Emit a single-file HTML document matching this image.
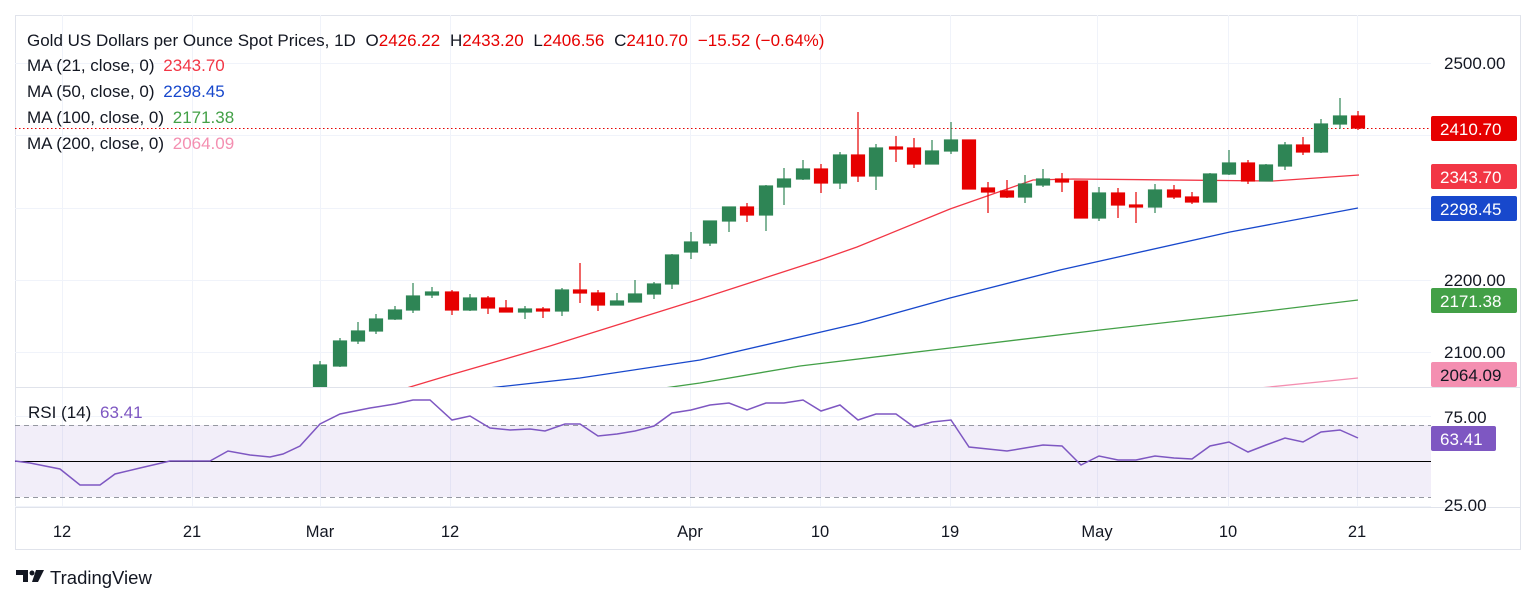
<!DOCTYPE html>
<html><head><meta charset="utf-8"><style>
body{margin:0;background:#fff;width:1536px;height:603px;overflow:hidden;font-family:"Liberation Sans",sans-serif}
svg text{font-family:"Liberation Sans",sans-serif}
</style></head><body>
<svg width="1536" height="603" xmlns="http://www.w3.org/2000/svg">
<rect x="15.5" y="15.5" width="1505" height="534" fill="#fff" stroke="#e0e3eb"/>
<g stroke="#f0f3fa" stroke-width="1">
<line x1="15" y1="63.5" x2="1431" y2="63.5"/><line x1="15" y1="135.5" x2="1431" y2="135.5"/><line x1="15" y1="208.5" x2="1431" y2="208.5"/><line x1="15" y1="280.5" x2="1431" y2="280.5"/><line x1="15" y1="352.5" x2="1431" y2="352.5"/>
<line x1="15" y1="416.5" x2="1431" y2="416.5"/><line x1="15" y1="506.5" x2="1431" y2="506.5"/>
<line x1="62.5" y1="15" x2="62.5" y2="507"/><line x1="192.5" y1="15" x2="192.5" y2="507"/><line x1="320.5" y1="15" x2="320.5" y2="507"/><line x1="450.5" y1="15" x2="450.5" y2="507"/><line x1="690.5" y1="15" x2="690.5" y2="507"/><line x1="820.5" y1="15" x2="820.5" y2="507"/><line x1="950.5" y1="15" x2="950.5" y2="507"/><line x1="1097.5" y1="15" x2="1097.5" y2="507"/><line x1="1228.5" y1="15" x2="1228.5" y2="507"/><line x1="1357.5" y1="15" x2="1357.5" y2="507"/>
</g>
<line x1="15" y1="387.5" x2="1520" y2="387.5" stroke="#e0e3eb"/>
<line x1="15" y1="507.5" x2="1520" y2="507.5" stroke="#e0e3eb"/>
<rect x="15" y="425" width="1416" height="72" fill="#7e57c2" fill-opacity="0.1"/>
<line x1="15" y1="425.5" x2="1431" y2="425.5" stroke="#9598a1" stroke-dasharray="5,4"/>
<line x1="15" y1="497.5" x2="1431" y2="497.5" stroke="#9598a1" stroke-dasharray="5,4"/>
<line x1="15" y1="461.5" x2="1431" y2="461.5" stroke="#000"/>
<polyline fill="none" stroke="#7e57c2" stroke-width="1.5" points="15,461 30,463 60,469 80,485 100,485 115,474 140,468 170,461 210,461 228,451 250,455 270,457 283,454 300,446 320,424 340,414 370,408 395,404 413,400 430,400 452,420 470,416 490,428 510,430 530,429 545,431 565,424 580,424 598,436 617,434 635,431 654,426 672,413 691,410 710,405 729,403 747,410 766,403 784,403 803,400 821,411 840,405 858,420 876,414 896,414 914,427 932,422 951,420 969,447 988,449 1007,451 1025,448 1043,445 1062,446 1081,465 1099,456 1118,460 1136,460 1155,456 1174,458 1192,459 1210,446 1229,442 1248,452 1266,445 1285,438 1303,442 1321,432 1340,430 1358,438"/>
<clipPath id="pc"><rect x="15" y="15" width="1416" height="372"/></clipPath>
<g clip-path="url(#pc)">
<line x1="15" y1="128.5" x2="1431" y2="128.5" stroke="#e60000" stroke-dasharray="1.5,2.5"/>
<polyline fill="none" stroke="#f23645" stroke-width="1.3" points="400,390 450,375 550,346 700,299 820,260 857,247 950,209 1033,180 1073,179 1273,181 1359,175"/>
<polyline fill="none" stroke="#1848cc" stroke-width="1.3" points="470,390 580,378 700,360 860,323 950,298 1060,270 1230,232 1358,208"/>
<polyline fill="none" stroke="#43a047" stroke-width="1.3" points="650,390 700,383 800,366 950,348 1100,330 1250,313 1358,300"/>
<polyline fill="none" stroke="#f48fb1" stroke-width="1.3" points="1240,390 1358,378"/>
<g stroke-width="1.2">
<g fill="#2e8555" stroke="#2e8555">
<line x1="320" y1="361" x2="320" y2="390"/><rect x="313.5" y="365" width="13" height="25"/>
<line x1="340" y1="338" x2="340" y2="367"/><rect x="333.5" y="341" width="13" height="25"/>
<line x1="358" y1="322" x2="358" y2="344"/><rect x="351.5" y="331" width="13" height="10"/>
<line x1="376" y1="314" x2="376" y2="334"/><rect x="369.5" y="319" width="13" height="12"/>
<line x1="395" y1="306" x2="395" y2="320"/><rect x="388.5" y="310" width="13" height="9"/>
<line x1="413" y1="283" x2="413" y2="313"/><rect x="406.5" y="296" width="13" height="14"/>
<line x1="432" y1="287" x2="432" y2="298"/><rect x="425.5" y="292" width="13" height="3"/>
<line x1="470" y1="294" x2="470" y2="311"/><rect x="463.5" y="298" width="13" height="12"/>
<line x1="525" y1="306" x2="525" y2="319"/><rect x="518.5" y="309" width="13" height="3"/>
<line x1="562" y1="288" x2="562" y2="316"/><rect x="555.5" y="290" width="13" height="21"/>
<line x1="617" y1="293" x2="617" y2="305"/><rect x="610.5" y="301" width="13" height="4"/>
<line x1="635" y1="280" x2="635" y2="302"/><rect x="628.5" y="294" width="13" height="8"/>
<line x1="654" y1="282" x2="654" y2="299"/><rect x="647.5" y="284" width="13" height="10"/>
<line x1="672" y1="254" x2="672" y2="289"/><rect x="665.5" y="255" width="13" height="29"/>
<line x1="691" y1="232" x2="691" y2="259"/><rect x="684.5" y="242" width="13" height="10"/>
<line x1="710" y1="221" x2="710" y2="246"/><rect x="703.5" y="221" width="13" height="22"/>
<line x1="729" y1="207" x2="729" y2="232"/><rect x="722.5" y="207" width="13" height="14"/>
<line x1="766" y1="185" x2="766" y2="231"/><rect x="759.5" y="186" width="13" height="29"/>
<line x1="784" y1="168" x2="784" y2="205"/><rect x="777.5" y="179" width="13" height="8"/>
<line x1="803" y1="160" x2="803" y2="180"/><rect x="796.5" y="169" width="13" height="10"/>
<line x1="840" y1="152" x2="840" y2="189"/><rect x="833.5" y="155" width="13" height="28"/>
<line x1="876" y1="144" x2="876" y2="190"/><rect x="869.5" y="148" width="13" height="28"/>
<line x1="932" y1="140" x2="932" y2="164"/><rect x="925.5" y="151" width="13" height="13"/>
<line x1="951" y1="122" x2="951" y2="154"/><rect x="944.5" y="140" width="13" height="11"/>
<line x1="1025" y1="175" x2="1025" y2="203"/><rect x="1018.5" y="184" width="13" height="13"/>
<line x1="1043" y1="169" x2="1043" y2="187"/><rect x="1036.5" y="179" width="13" height="6"/>
<line x1="1099" y1="187" x2="1099" y2="221"/><rect x="1092.5" y="193" width="13" height="25"/>
<line x1="1155" y1="184" x2="1155" y2="213"/><rect x="1148.5" y="190" width="13" height="17"/>
<line x1="1210" y1="173" x2="1210" y2="202"/><rect x="1203.5" y="174" width="13" height="28"/>
<line x1="1229" y1="150" x2="1229" y2="175"/><rect x="1222.5" y="163" width="13" height="11"/>
<line x1="1266" y1="164" x2="1266" y2="181"/><rect x="1259.5" y="165" width="13" height="16"/>
<line x1="1285" y1="142" x2="1285" y2="170"/><rect x="1278.5" y="145" width="13" height="21"/>
<line x1="1321" y1="119" x2="1321" y2="153"/><rect x="1314.5" y="124" width="13" height="28"/>
<line x1="1340" y1="98" x2="1340" y2="129"/><rect x="1333.5" y="116" width="13" height="8"/>
</g>
<g fill="#e60000" stroke="#e60000">
<line x1="452" y1="290" x2="452" y2="315"/><rect x="445.5" y="292" width="13" height="18"/>
<line x1="488" y1="296" x2="488" y2="314"/><rect x="481.5" y="298" width="13" height="10"/>
<line x1="506" y1="300" x2="506" y2="312"/><rect x="499.5" y="308" width="13" height="4"/>
<line x1="543" y1="307" x2="543" y2="318"/><rect x="536.5" y="309" width="13" height="2"/>
<line x1="580" y1="263" x2="580" y2="303"/><rect x="573.5" y="290" width="13" height="3"/>
<line x1="598" y1="290" x2="598" y2="311"/><rect x="591.5" y="293" width="13" height="12"/>
<line x1="747" y1="203" x2="747" y2="222"/><rect x="740.5" y="207" width="13" height="8"/>
<line x1="821" y1="164" x2="821" y2="193"/><rect x="814.5" y="169" width="13" height="14"/>
<line x1="858" y1="112" x2="858" y2="182"/><rect x="851.5" y="155" width="13" height="21"/>
<line x1="896" y1="136" x2="896" y2="162"/><rect x="889.5" y="147" width="13" height="2"/>
<line x1="914" y1="138" x2="914" y2="168"/><rect x="907.5" y="148" width="13" height="16"/>
<line x1="969" y1="140" x2="969" y2="189"/><rect x="962.5" y="140" width="13" height="49"/>
<line x1="988" y1="182" x2="988" y2="213"/><rect x="981.5" y="188" width="13" height="4"/>
<line x1="1007" y1="180" x2="1007" y2="198"/><rect x="1000.5" y="191" width="13" height="6"/>
<line x1="1062" y1="173" x2="1062" y2="192"/><rect x="1055.5" y="179" width="13" height="3"/>
<line x1="1081" y1="181" x2="1081" y2="218"/><rect x="1074.5" y="181" width="13" height="37"/>
<line x1="1118" y1="188" x2="1118" y2="218"/><rect x="1111.5" y="193" width="13" height="12"/>
<line x1="1136" y1="192" x2="1136" y2="223"/><rect x="1129.5" y="205" width="13" height="2"/>
<line x1="1174" y1="185" x2="1174" y2="199"/><rect x="1167.5" y="190" width="13" height="7"/>
<line x1="1192" y1="192" x2="1192" y2="204"/><rect x="1185.5" y="197" width="13" height="5"/>
<line x1="1248" y1="160" x2="1248" y2="184"/><rect x="1241.5" y="163" width="13" height="18"/>
<line x1="1303" y1="137" x2="1303" y2="155"/><rect x="1296.5" y="145" width="13" height="7"/>
<line x1="1358" y1="111" x2="1358" y2="130"/><rect x="1351.5" y="116" width="13" height="12"/>
</g>
</g>
</g>
<g font-size="17" fill="#131722">
<text x="1444" y="69">2500.00</text>
<text x="1444" y="286">2200.00</text>
<text x="1444" y="358">2100.00</text>
<text x="1444" y="423">75.00</text>
<text x="1444" y="511">25.00</text>
</g>
<rect x="1431" y="116" width="86" height="25" rx="2" fill="#e60000"/><text x="1440" y="135" font-size="17" fill="#fff">2410.70</text>
<rect x="1431" y="164" width="86" height="25" rx="2" fill="#f23645"/><text x="1440" y="183" font-size="17" fill="#fff">2343.70</text>
<rect x="1431" y="196" width="86" height="25" rx="2" fill="#1848cc"/><text x="1440" y="215" font-size="17" fill="#fff">2298.45</text>
<rect x="1431" y="288" width="86" height="25" rx="2" fill="#43a047"/><text x="1440" y="307" font-size="17" fill="#fff">2171.38</text>
<rect x="1431" y="362" width="86" height="25" rx="2" fill="#f48fb1"/><text x="1440" y="381" font-size="17" fill="#131722">2064.09</text>
<rect x="1431" y="426" width="65" height="25" rx="2" fill="#7e57c2"/><text x="1440" y="445" font-size="17" fill="#fff">63.41</text>
<g font-size="16.5" fill="#131722" text-anchor="middle">
<text x="62" y="537">12</text><text x="192" y="537">21</text><text x="320" y="537">Mar</text><text x="450" y="537">12</text><text x="690" y="537">Apr</text><text x="820" y="537">10</text><text x="950" y="537">19</text><text x="1097" y="537">May</text><text x="1228" y="537">10</text><text x="1357" y="537">21</text>
</g>
<g font-size="17" fill="#131722">
<text x="27" y="46">Gold US Dollars per Ounce Spot Prices, 1D  <tspan dx="5">O</tspan><tspan fill="#e60000">2426.22</tspan>  <tspan dx="5">H</tspan><tspan fill="#e60000">2433.20</tspan>  <tspan dx="5">L</tspan><tspan fill="#e60000">2406.56</tspan>  <tspan dx="5">C</tspan><tspan fill="#e60000">2410.70</tspan><tspan fill="#e60000" dx="10">−15.52 (−0.64%)</tspan></text>
<text x="27" y="71">MA (21, close, 0) <tspan fill="#f23645" dx="4">2343.70</tspan></text>
<text x="27" y="97">MA (50, close, 0) <tspan fill="#1848cc" dx="4">2298.45</tspan></text>
<text x="27" y="123">MA (100, close, 0) <tspan fill="#43a047" dx="4">2171.38</tspan></text>
<text x="27" y="149">MA (200, close, 0) <tspan fill="#f48fb1" dx="4">2064.09</tspan></text>
<text x="28" y="418">RSI (14) <tspan fill="#7e57c2" dx="4">63.41</tspan></text>
</g>
<g fill="#131722">
<path d="M16 570h12v12h-5v-7h-7z"/>
<circle cx="32" cy="573" r="2.5"/>
<path d="M36 570h8l-6 12h-6z"/>
</g>
<text x="50" y="584" font-size="18.5" fill="#131722">TradingView</text>
</svg>
</body></html>
